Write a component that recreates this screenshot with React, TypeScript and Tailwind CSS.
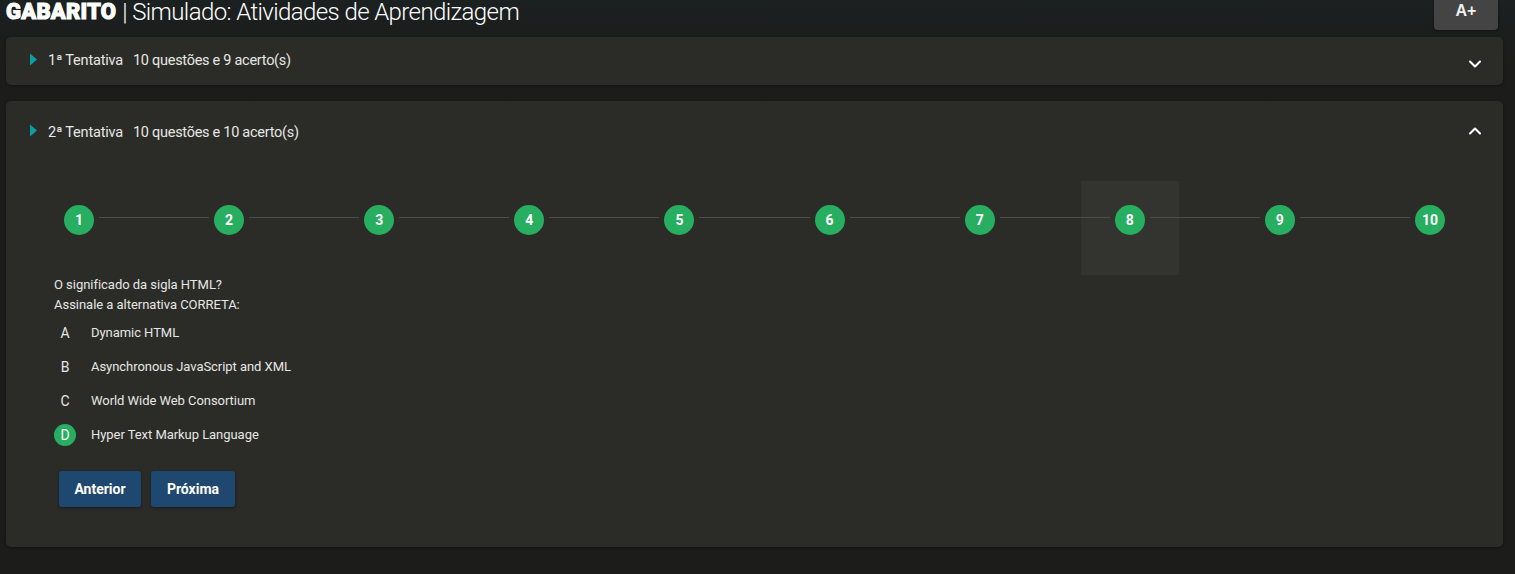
import { ChevronDown, ChevronUp } from 'lucide-react'

const steps = [1, 2, 3, 4, 5, 6, 7, 8, 9, 10]

const options = [
  { letter: 'A', text: 'Dynamic HTML' },
  { letter: 'B', text: 'Asynchronous JavaScript and XML' },
  { letter: 'C', text: 'World Wide Web Consortium' },
  { letter: 'D', text: 'Hyper Text Markup Language', correct: true },
]

function Caret() {
  return (
    <svg className="mb-[4px] h-[13px] w-[8px] text-[#0c9ea0]" viewBox="0 0 8 13" fill="currentColor">
      <path d="M0 0.5L7 6.5L0 12.5Z" />
    </svg>
  )
}

function AttemptTitle({ label, summary }: { label: string; summary: string }) {
  return (
    <div className="flex items-center text-[14.5px] tracking-[-0.2px] text-[#e6e6e4]">
      <Caret />
      <span className="ml-[10px] w-[85px]">{label}</span>
      <span className="tracking-[-0.28px]">{summary}</span>
    </div>
  )
}

export default function App() {
  return (
    <div className="h-[574px] overflow-hidden bg-[#1c1c1b] bg-gradient-to-b from-[#1b2020] to-[#1c1c1b] to-[60px] font-['Roboto',sans-serif]">
      {/* Header */}
      <div className="flex h-[37px] items-start justify-between pl-[6px] pr-[17px]">
        <h1 className="flex h-[24px] items-center whitespace-nowrap text-white">
          <span className="text-[22px] font-black leading-[24px] tracking-[0.2px] [-webkit-text-stroke:1px_white]">GABARITO</span>
          <span className="ml-[6px] text-[24px] font-light leading-[24px] tracking-[-0.6px]">| Simulado: Atividades de Aprendizagem</span>
        </h1>
        <button className="flex h-[30px] w-[64px] items-center justify-center rounded-b-[4px] bg-[#444444] pb-[8px] font-['Liberation_Sans',sans-serif] text-[16px] font-bold leading-[22px] text-[#f0f0f0] shadow-[0_1px_3px_rgba(0,0,0,0.4)]">
          A+
        </button>
      </div>

      <div className="mx-[6px] w-[1497px]">
        {/* Tentativa 1 */}
        <div className="flex h-[48px] items-center justify-between rounded-[5px] bg-[#2b2c28] pl-[24px] pr-[18px] shadow-[0_1px_3px_rgba(0,0,0,0.35)]">
          <AttemptTitle label="1ª Tentativa" summary="10 questões e 9 acerto(s)" />
          <ChevronDown className="mt-[6px] h-[20px] w-[20px] text-white" strokeWidth={2.5} />
        </div>

        {/* Tentativa 2 */}
        <div className="mt-[16px] h-[446px] rounded-[5px] bg-[#2b2c28] shadow-[0_1px_3px_rgba(0,0,0,0.35)]">
          <div className="flex h-[62px] items-center justify-between pl-[24px] pr-[18px] pt-[1px]">
            <AttemptTitle label="2ª Tentativa" summary="10 questões e 10 acerto(s)" />
            <ChevronUp className="mb-[3px] h-[20px] w-[20px] text-white" strokeWidth={2.5} />
          </div>

          {/* Stepper */}
          <div className="ml-[58px] mt-[42px] flex w-[1381px] items-center">
            {steps.map((n) => (
              <div key={n} className={`flex items-center ${n < 10 ? 'flex-1' : ''}`}>
                <div className="relative flex h-[30px] w-[30px] shrink-0 items-center justify-center">
                  {n === 8 && <div className="absolute left-[-34px] top-[-24px] h-[94px] w-[98px] bg-[#333430]" />}
                  <div className="relative flex h-[30px] w-[30px] items-center justify-center rounded-full bg-[#27ae60] text-[14px] font-bold text-white">
                    {n}
                  </div>
                </div>
                {n < 10 && <div className="relative z-10 mx-[5px] mb-[5px] h-px flex-1 bg-[#4c4d49]" />}
              </div>
            ))}
          </div>

          {/* Questão */}
          <div className="ml-[48px] mt-[40px] text-[13px] leading-[20px] tracking-[-0.03px] text-[#e6e6e4]">
            <p>O significado da sigla HTML?</p>
            <p>Assinale a alternativa CORRETA:</p>
          </div>
          <ul className="ml-[48px] mt-[7px] flex flex-col gap-[12px] text-[13px] tracking-[-0.05px] text-[#e6e6e4]">
            {options.map((o) => (
              <li key={o.letter} className="flex h-[22px] items-center">
                <span className={`flex h-[22px] w-[22px] items-center justify-center rounded-full text-[14px] ${o.correct ? 'bg-[#27ae60] text-white' : ''}`}>
                  {o.letter}
                </span>
                <span className="ml-[15px]">{o.text}</span>
              </li>
            ))}
          </ul>

          <div className="ml-[53px] mt-[25px] flex gap-[10px] text-[14px] font-bold text-white">
            <button className="h-[36px] w-[82px] rounded-[3px] bg-[#1f4871] shadow-[0_1px_3px_rgba(0,0,0,0.4)]">Anterior</button>
            <button className="h-[36px] w-[84px] rounded-[3px] bg-[#1f4871] shadow-[0_1px_3px_rgba(0,0,0,0.4)]">Próxima</button>
          </div>
        </div>
      </div>
    </div>
  )
}
